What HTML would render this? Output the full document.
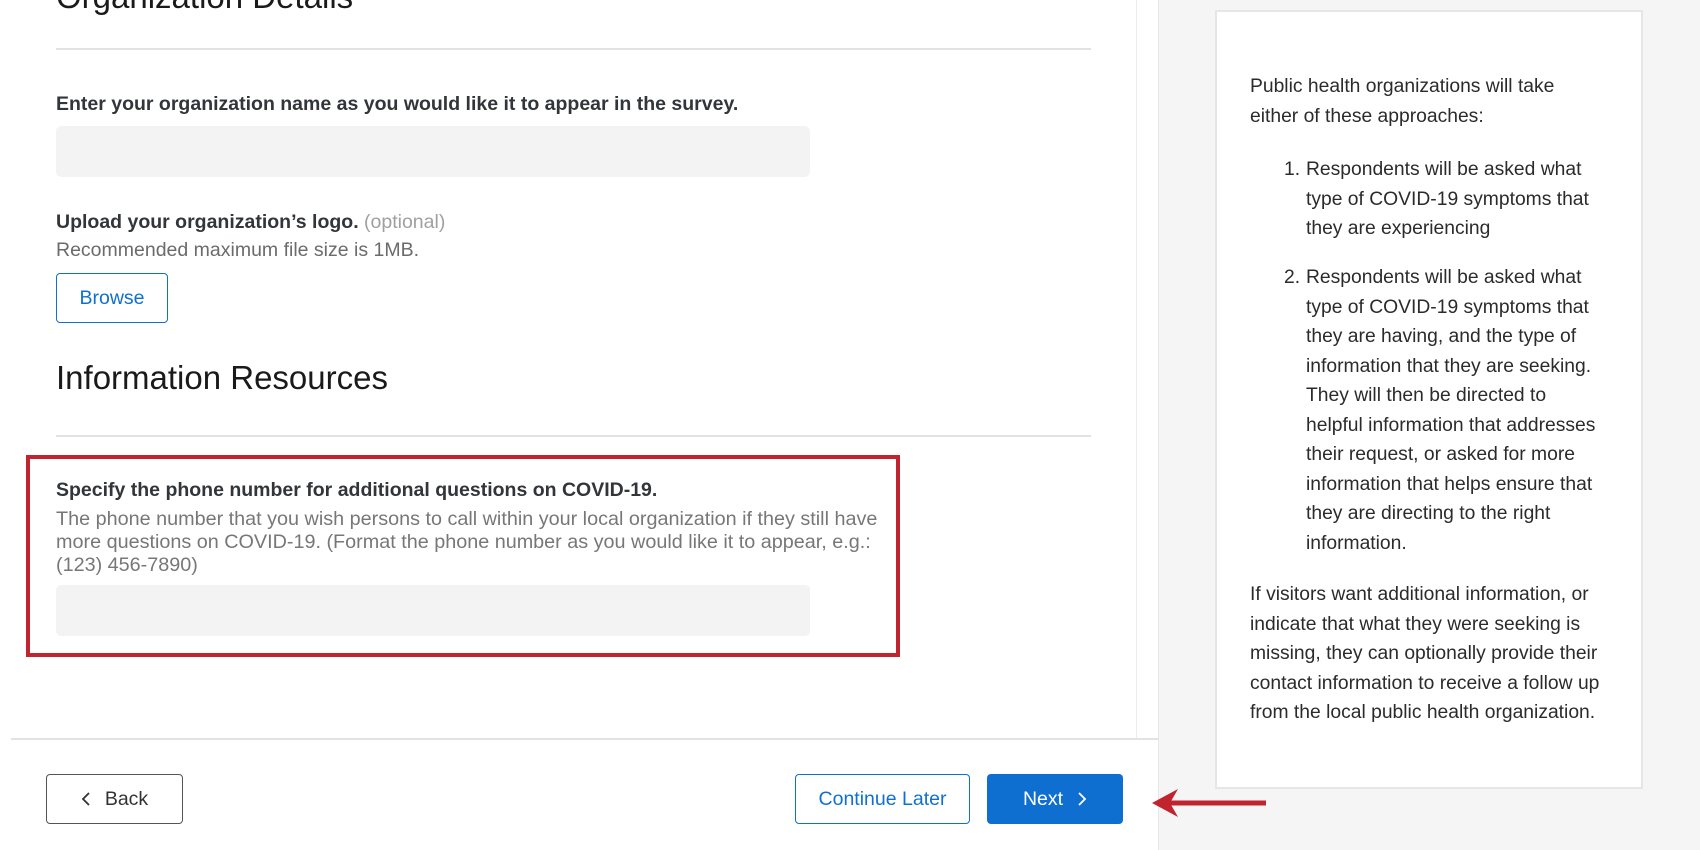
<!DOCTYPE html>
<html><head><style>
*{margin:0;padding:0;box-sizing:border-box}
body{width:1700px;height:850px;overflow:hidden;background:#fff;font-family:"Liberation Sans",sans-serif;color:#32363a;position:relative}
.a{position:absolute}
.line{height:2px;background:#e2e2e2}
.lbl{font-weight:bold;font-size:19.5px;color:#32363a;white-space:nowrap}
.inp{background:#f3f3f3;border-radius:5px}
.side{left:1158px;top:0;width:542px;height:850px;background:#f5f5f5;border-left:1px solid #e8e8e8}
.panel{left:1215px;top:10px;width:428px;height:779px;background:#fff;border:2px solid #e6e6e6}
.pt{font-size:19.3px;line-height:29.5px;color:#2b2b2b;white-space:nowrap}
.btn{border-radius:4px;font-size:19.5px;display:flex;align-items:center;justify-content:center}
</style></head><body>
<div class="a" style="left:1136px;top:0;width:1px;height:739px;background:#ececec"></div>
<div class="a side"></div>
<div class="a panel"></div>
<div class="a pt" style="left:1250px;top:72px">Public health organizations will take<br>either of these approaches:</div>
<div class="a pt" style="left:1284px;top:155px">1.</div>
<div class="a pt" style="left:1306px;top:155px">Respondents will be asked what<br>type of COVID-19 symptoms that<br>they are experiencing</div>
<div class="a pt" style="left:1284px;top:263px">2.</div>
<div class="a pt" style="left:1306px;top:263px">Respondents will be asked what<br>type of COVID-19 symptoms that<br>they are having, and the type of<br>information that they are seeking.<br>They will then be directed to<br>helpful information that addresses<br>their request, or asked for more<br>information that helps ensure that<br>they are directing to the right<br>information.</div>
<div class="a pt" style="left:1250px;top:580px">If visitors want additional information, or<br>indicate that what they were seeking is<br>missing, they can optionally provide their<br>contact information to receive a follow up<br>from the local public health organization.</div>

<div class="a" style="left:56px;top:-22px;font-size:33px;color:#1a1a1a">Organization Details</div>
<div class="a line" style="left:56px;top:48px;width:1035px"></div>
<div class="a lbl" style="left:56px;top:93px">Enter your organization name as you would like it to appear in the survey.</div>
<div class="a inp" style="left:56px;top:126px;width:754px;height:51px"></div>
<div class="a lbl" style="left:56px;top:211px">Upload your organization’s logo. <span style="font-weight:normal;color:#a0a0a0">(optional)</span></div>
<div class="a" style="left:56px;top:239px;font-size:19.5px;color:#6b6b6b">Recommended maximum file size is 1MB.</div>
<div class="a btn" style="left:56px;top:273px;width:112px;height:50px;border:1.5px solid #1070d0;color:#1070d0">Browse</div>
<div class="a" style="left:56px;top:359px;font-size:33px;color:#1a1a1a">Information Resources</div>
<div class="a line" style="left:56px;top:435px;width:1035px"></div>
<div class="a" style="left:26px;top:455px;width:874px;height:202px;border:4.5px solid #c1232f"></div>
<div class="a lbl" style="left:56px;top:479px">Specify the phone number for additional questions on COVID-19.</div>
<div class="a" style="left:56px;top:508px;font-size:19.8px;line-height:23px;color:#777;white-space:nowrap">The phone number that you wish persons to call within your local organization if they still have<br>more questions on COVID-19. (Format the phone number as you would like it to appear, e.g.:<br>(123) 456-7890)</div>
<div class="a inp" style="left:56px;top:585px;width:754px;height:51px"></div>

<div class="a line" style="left:11px;top:738px;width:1147px"></div>
<div class="a btn" style="left:46px;top:774px;width:137px;height:50px;border:1.5px solid #555;color:#333"><svg width="10" height="16" style="margin-right:14px"><path d="M8 2L2 8L8 14" stroke="#333" stroke-width="1.8" fill="none"/></svg>Back</div>
<div class="a btn" style="left:795px;top:774px;width:175px;height:50px;border:1.5px solid #1070d0;color:#1070d0">Continue Later</div>
<div class="a btn" style="left:987px;top:774px;width:136px;height:50px;background:#0f6fd1;color:#fff">Next<svg width="10" height="16" style="margin-left:14px"><path d="M2 2L8 8L2 14" stroke="#fff" stroke-width="1.8" fill="none"/></svg></div>
<svg class="a" style="left:1148px;top:785px" width="120" height="36"><path d="M118 18H22" stroke="#c1232f" stroke-width="5"/><path d="M4 18L30 4L22 18L30 32Z" fill="#c1232f"/></svg>
</body></html>
